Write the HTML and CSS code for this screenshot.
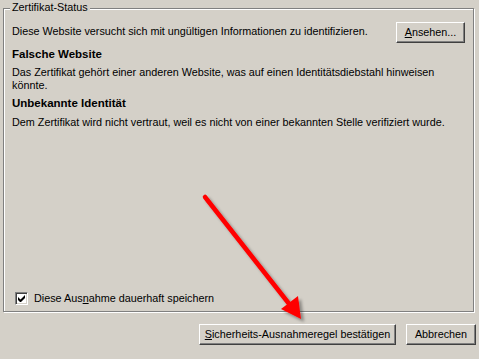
FILE: index.html
```html
<!DOCTYPE html>
<html>
<head>
    <title>Sicherheits-Ausnahmeregel hinzufügen</title>
    <meta charset="utf-8">
    <link rel="stylesheet" href="styles.css">
</head>
<body>
    <div class="dialog">
        <div class="group">
            <span class="legend">Zertifikat-Status</span>

            <div class="status-row">
                <p class="intro">Diese Website versucht sich mit ungültigen Informationen zu identifizieren.</p>
                <button class="btn btn-view"><u>A</u>nsehen...</button>
            </div>

            <h3 class="issue-title">Falsche Website</h3>
            <p class="issue-text">Das Zertifikat gehört einer anderen Website, was auf einen Identitätsdiebstahl hinweisen könnte.</p>

            <h3 class="issue-title issue-second">Unbekannte Identität</h3>
            <p class="issue-text">Dem Zertifikat wird nicht vertraut, weil es nicht von einer bekannten Stelle verifiziert wurde.</p>

            <label class="remember">
                <span class="checkbox">
                    <svg width="7" height="7" viewBox="0 0 7 7">
                        <path d="M0 2v3l2 2h1l4-4V0L2.5 4.5z" fill="#000"/>
                    </svg>
                </span>
                <span>Diese Aus<u>n</u>ahme dauerhaft speichern</span>
            </label>
        </div>

        <div class="actions">
            <button class="btn btn-confirm"><u>S</u>icherheits-Ausnahmeregel bestätigen</button>
            <button class="btn btn-cancel">Abbrechen</button>
        </div>

        <!-- red hint arrow drawn over the dialog -->
        <svg class="arrow" width="479" height="359" viewBox="0 0 479 359">
            <defs>
                <filter id="shadow" x="-20%" y="-20%" width="140%" height="140%">
                    <feDropShadow dx="3" dy="3" stdDeviation="1.5" flood-color="#000" flood-opacity="0.35"/>
                </filter>
            </defs>
            <g filter="url(#shadow)">
                <line x1="205" y1="197" x2="290" y2="305" stroke="#ff0000" stroke-width="4.5" stroke-linecap="round"/>
                <polygon points="281,309 298,296 301,319" fill="#ff0000"/>
            </g>
        </svg>
    </div>
</body>
</html>
```

FILE: styles.css
```css
body {
    margin: 0;
    background: #d4d0c8;
    font-family: "Liberation Sans", Arial, sans-serif;
    font-size: 10.8px;
    line-height: 13px;
    color: #000;
}

.dialog {
    position: relative;
    width: 479px;
    height: 359px;
    padding: 8px 0 0 3px;
    box-sizing: border-box;
}

.group {
    position: relative;
    width: 471px;
    height: 304px;
    box-sizing: border-box;
    border: 1px solid #808080;
    box-shadow: 1px 1px 0 #fff, inset 1px 1px 0 #fff;
    padding: 13px 8px 6px 8px;
    display: flex;
    flex-direction: column;
}

.legend {
    position: absolute;
    top: -8px;
    left: 6px;
    padding: 0 2px;
    background: #d4d0c8;
}

.status-row {
    display: flex;
    justify-content: space-between;
    align-items: flex-start;
}

.intro {
    margin: 3px 0 0;
}

.issue-title {
    margin: 5px 0 0;
    font-size: 11.5px;
    font-weight: bold;
}

.issue-second {
    margin-top: 5px;
}

.issue-text {
    margin: 5px 0 0;
    padding-right: 2px;
}

.issue-second + .issue-text {
    margin-top: 6px;
}

.remember {
    margin-top: auto;
    margin-left: 3px;
    display: flex;
    align-items: center;
    gap: 6px;
}

.checkbox {
    width: 13px;
    height: 13px;
    box-sizing: border-box;
    background: #fff;
    border-top: 1px solid #808080;
    border-left: 1px solid #808080;
    border-right: 1px solid #fff;
    border-bottom: 1px solid #fff;
    box-shadow: inset 1px 1px 0 #404040, inset -1px -1px 0 #d4d0c8;
    display: flex;
    align-items: center;
    justify-content: center;
}

.btn {
    font-family: inherit;
    font-size: 10.8px;
    line-height: 13px;
    color: #000;
    background: #d4d0c8;
    height: 21px;
    padding: 0;
    box-sizing: border-box;
    border-top: 1px solid #fff;
    border-left: 1px solid #fff;
    border-right: 1px solid #404040;
    border-bottom: 1px solid #404040;
    box-shadow: inset -1px -1px 0 #808080;
    border-radius: 0;
}

.btn-view {
    width: 69px;
}

.actions {
    display: flex;
    justify-content: flex-end;
    gap: 10px;
    padding: 12px 3px 0 0;
}

.btn-confirm {
    width: 197px;
}

.btn-cancel {
    width: 70px;
}

.arrow {
    position: absolute;
    top: 0;
    left: 0;
    pointer-events: none;
}
```
